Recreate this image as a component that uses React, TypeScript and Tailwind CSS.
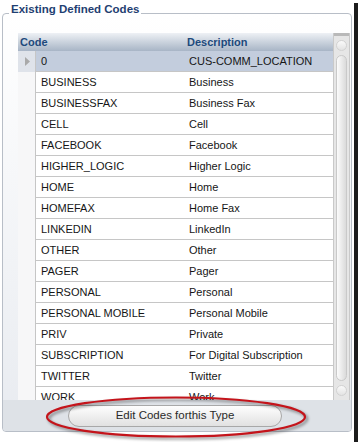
const rows: [string, string][] = [
  ['0', 'CUS-COMM_LOCATION'],
  ['BUSINESS', 'Business'],
  ['BUSINESSFAX', 'Business Fax'],
  ['CELL', 'Cell'],
  ['FACEBOOK', 'Facebook'],
  ['HIGHER_LOGIC', 'Higher Logic'],
  ['HOME', 'Home'],
  ['HOMEFAX', 'Home Fax'],
  ['LINKEDIN', 'LinkedIn'],
  ['OTHER', 'Other'],
  ['PAGER', 'Pager'],
  ['PERSONAL', 'Personal'],
  ['PERSONAL MOBILE', 'Personal Mobile'],
  ['PRIV', 'Private'],
  ['SUBSCRIPTION', 'For Digital Subscription'],
  ['TWITTER', 'Twitter'],
  ['WORK', 'Work'],
]

function ScrollButton() {
  return (
    <div className="flex h-[19px] items-center justify-center">
      <div className="h-[11px] w-[11px] rounded-full border border-[#d2d2d2] bg-gradient-to-b from-[#fafafa] to-[#e3e3e3]" />
    </div>
  )
}

export default function App() {
  return (
    <div className="relative h-[442px] w-[358px] overflow-hidden bg-white font-['Liberation_Sans',Arial,sans-serif]">
      <div className="h-full w-full border-r-4 border-b-[3px] border-[#1c1c1c]">
        <fieldset className="mx-[2px] mt-[3px] h-[429px] w-[350px] rounded-[4px] border border-[#b8bec7] bg-gradient-to-b from-[#ffffff] to-[#e8ebf0]">
          <legend className="ml-[6px] px-[2px] pb-[8px] text-[11.5px] font-bold leading-[12px] text-[#1f3f72]">
            Existing Defined Codes
          </legend>
          <div className="flex h-[408px] flex-col">
            {/* grid */}
            <div className="mt-auto flex h-[367px] pl-[15px] pr-px">
              <div className="flex flex-1 flex-col overflow-hidden">
                <div className="flex h-[18px] shrink-0 items-center bg-gradient-to-b from-[#eef1f5] to-[#a8b5c6] text-[11px] font-bold text-[#1e4a7c]">
                  <div className="w-[168px] pl-[2px]">Code</div>
                  <div className="pl-px">Description</div>
                </div>
                {rows.map(([code, desc], i) => (
                  <div key={code} className="flex h-[21px] shrink-0 text-[11px] text-[#161616]">
                    <div
                      className={
                        'flex w-[18px] items-center border-r border-[#c6c6c6] pl-[7px] ' +
                        (i === 0 ? 'bg-[#dfe3ea]' : 'bg-[#f7f7f8]')
                      }
                    >
                      {i === 0 && (
                        <svg width="5" height="9" viewBox="0 0 5 9">
                          <path d="M0 0 L5 4.5 L0 9 Z" fill="#a9a9a9" />
                        </svg>
                      )}
                    </div>
                    <div
                      className={
                        'flex flex-1 items-center border-b border-[#c6c6c6] ' +
                        (i === 0 ? 'bg-[#c3cddd]' : 'bg-white')
                      }
                    >
                      <div className="w-[149px] pl-[5px]">{code}</div>
                      <div className="pl-[4px]">{desc}</div>
                    </div>
                  </div>
                ))}
              </div>
              {/* scrollbar */}
              <div className="flex w-[17px] flex-col border-x border-[#c9c9c9] bg-[#e6e6e6]">
                <div className="h-[3px] bg-[#b9b9b9]" />
                <ScrollButton />
                <div className="mx-[2px] flex-1 rounded-[6px] border border-[#c9c9c9] bg-gradient-to-r from-[#fcfcfc] to-[#dadada]" />
                <ScrollButton />
              </div>
            </div>
            {/* footer */}
            <div className="flex h-[31px] shrink-0 items-center justify-center rounded-b-[3px] bg-[#dee2e7] pr-[4px]">
              <button className="h-[22px] w-[214px] rounded-[11px] border border-[#a8a8a8] bg-gradient-to-b from-[#fefefe] to-[#e1e1e1] text-[11.5px] text-[#2a2a2a]">
                Edit Codes forthis Type
              </button>
            </div>
          </div>
        </fieldset>
      </div>
      {/* red annotation ellipse */}
      <svg
        className="absolute left-[45px] top-[395px] drop-shadow-[2px_2px_1.5px_rgba(0,0,0,0.45)]"
        width="266"
        height="46"
        viewBox="0 0 266 46"
      >
        <ellipse cx="131" cy="22" rx="129" ry="19.5" fill="none" stroke="#c4141b" strokeWidth="2.2" />
      </svg>
    </div>
  )
}
